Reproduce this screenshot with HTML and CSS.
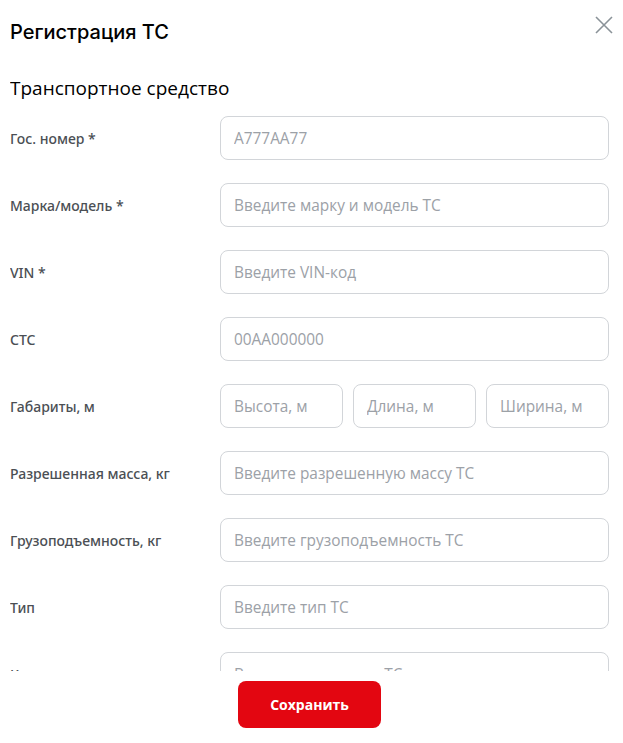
FILE: index.html
```html
<!DOCTYPE html>
<html lang="ru">
<head>
    <meta charset="UTF-8">
    <meta name="viewport" content="width=device-width, initial-scale=1.0">
    <title>Регистрация ТС</title>
    <link rel="stylesheet" href="styles.css">
</head>
<body>
    <div class="modal">
        <div class="header">
            <h2>Регистрация ТС</h2>
            <button class="close" aria-label="Закрыть">
                <svg width="18" height="18" viewBox="0 0 18 18"><path d="M1 1L17 17M17 1L1 17" stroke="#8a9298" stroke-width="1.6" fill="none"/></svg>
            </button>
        </div>
        <div class="scroll">
            <h3>Транспортное средство</h3>
            <div class="row">
                <label for="num">Гос. номер *</label>
                <input type="text" id="num" placeholder="А777АА77">
            </div>
            <div class="row">
                <label for="model">Марка/модель *</label>
                <input type="text" id="model" placeholder="Введите марку и модель ТС">
            </div>
            <div class="row">
                <label for="vin">VIN *</label>
                <input type="text" id="vin" placeholder="Введите VIN-код">
            </div>
            <div class="row">
                <label for="sts">СТС</label>
                <input type="text" id="sts" placeholder="00АА000000">
            </div>
            <div class="row">
                <label for="height">Габариты, м</label>
                <div class="dims">
                    <input type="text" id="height" placeholder="Высота, м">
                    <input type="text" id="length" placeholder="Длина, м">
                    <input type="text" id="width" placeholder="Ширина, м">
                </div>
            </div>
            <div class="row">
                <label for="mass">Разрешенная масса, кг</label>
                <input type="text" id="mass" placeholder="Введите разрешенную массу ТС">
            </div>
            <div class="row">
                <label for="load">Грузоподъемность, кг</label>
                <input type="text" id="load" placeholder="Введите грузоподъемность ТС">
            </div>
            <div class="row">
                <label for="type">Тип</label>
                <input type="text" id="type" placeholder="Введите тип ТС">
            </div>
            <div class="row">
                <label for="cat">Категория</label>
                <input type="text" id="cat" placeholder="Введите категорию ТС">
            </div>
        </div>
        <div class="footer">
            <button class="save">Сохранить</button>
        </div>
    </div>
</body>
</html>
```

FILE: styles.css
```css
body {
    margin: 0;
    font-family: "Open Sans", Arial, sans-serif;
    background: #fff;
    color: #1d2023;
}

.modal {
    padding: 0 14px 0 10px;
}

.header {
    height: 64px;
    display: flex;
    justify-content: space-between;
    align-items: center;
}

.header h2 {
    margin: 0;
    font-family: Inter, "Open Sans", sans-serif;
    font-size: 20px;
    font-weight: 500;
    color: #000;
}

.close {
    border: none;
    background: none;
    padding: 0;
    margin: 0 -4px 14px 0;
    cursor: pointer;
    display: flex;
}

.scroll {
    height: 607px;
    overflow: hidden;
}

.scroll h3 {
    margin: 12px 0 16px;
    font-size: 19px;
    line-height: 24px;
    font-weight: 400;
    color: #000;
}

.row {
    display: grid;
    grid-template-columns: 210px 1fr;
    align-items: center;
    margin-bottom: 23px;
}

.row label {
    font-family: "Noto Sans", Arial, sans-serif;
    font-size: 14px;
    font-weight: 500;
    color: #4b4f54;
}

input {
    box-sizing: border-box;
    width: 100%;
    height: 44px;
    padding: 0 13px;
    border: 1px solid #d2d5d9;
    border-radius: 8px;
    font-family: inherit;
    font-size: 15.4px;
    color: #1d2023;
    outline: none;
}

input::placeholder {
    color: #9ca1a7;
}

.dims {
    display: grid;
    grid-template-columns: 1fr 1fr 1fr;
    gap: 10px;
}

.footer {
    display: flex;
    justify-content: center;
    padding: 10px 0 0;
}

.save {
    width: 143px;
    height: 47px;
    border: none;
    border-radius: 8px;
    background-color: #e30611;
    color: #fff;
    font-family: inherit;
    font-size: 14px;
    font-weight: 700;
    cursor: pointer;
}

.save:hover {
    background-color: #c8050f;
}
```
